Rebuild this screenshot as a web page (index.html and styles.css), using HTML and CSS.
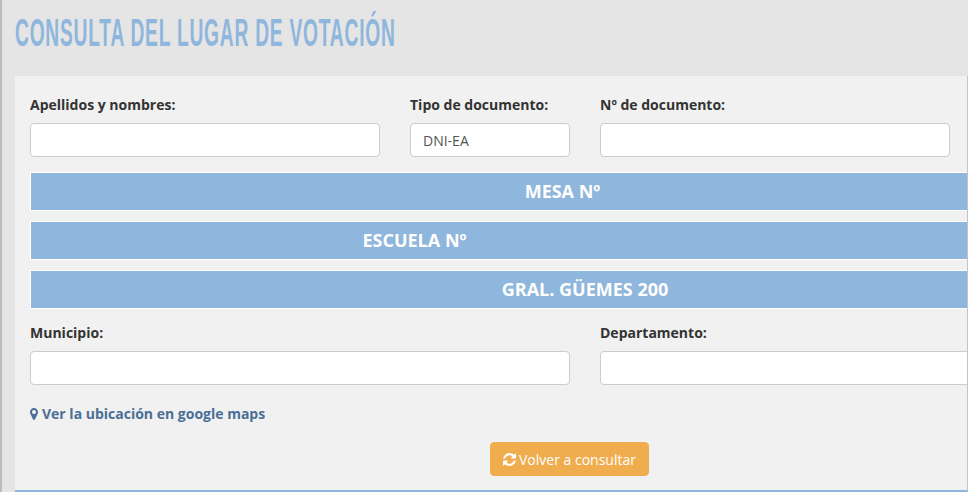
FILE: index.html
```html
<!DOCTYPE html>
<html lang="es">
<head>
<meta charset="utf-8">
<title>Consulta del lugar de votación</title>
<link rel="stylesheet" href="styles.css">
</head>
<body>
<div class="page">
  <h1 class="title">CONSULTA DEL LUGAR DE VOTACIÓN</h1>
  <main class="panel">
    <div class="row row-top">
      <div class="field"><label class="label">Apellidos y nombres:</label><input class="input" type="text" readonly></div>
      <div class="field"><label class="label">Tipo de documento:</label><input class="input" type="text" value="DNI-EA" readonly></div>
      <div class="field"><label class="label">Nº de documento:</label><input class="input" type="text" readonly></div>
    </div>
    <div class="bars">
      <div class="bar">MESA Nº<span class="gap gap-mesa"></span></div>
      <div class="bar">ESCUELA Nº<span class="gap gap-escuela"></span></div>
      <div class="bar">GRAL. GÜEMES 200</div>
    </div>
    <div class="row row-bottom">
      <div class="field"><label class="label">Municipio:</label><input class="input" type="text" readonly></div>
      <div class="field"><label class="label">Departamento:</label><input class="input" type="text" readonly></div>
    </div>
    <a class="map-link" href="#">
      <svg class="pin" viewBox="384 128 1024 1536" aria-hidden="true"><path d="M1152 640q0-106-75-181t-181-75-181 75-75 181 75 181 181 75 181-75 75-181zm256 0q0 109-33 179l-364 774q-16 33-47.5 52t-67.5 19-67.5-19-46.5-52l-365-774q-33-70-33-179 0-212 150-362t362-150 362 150 150 362z"/></svg>Ver la ubicación en google maps
    </a>
    <div class="actions">
      <button class="btn" type="button">
        <svg class="refresh" viewBox="128 128 1536 1536" aria-hidden="true"><path d="M1639 1056q0 5-1 7-64 268-268 434.5t-478 166.5q-146 0-282.5-55t-243.5-157l-129 129q-19 19-45 19t-45-19-19-45v-448q0-26 19-45t45-19h448q26 0 45 19t19 45-19 45l-137 137q71 66 161 102t187 36q134 0 250-65t186-179q11-17 53-117 8-23 30-23h192q13 0 22.5 9.5t9.5 22.5zm25-800v448q0 26-19 45t-45 19h-448q-26 0-45-19t-19-45 19-45l138-138q-148-137-349-137-134 0-250 65t-186 179q-11 17-53 117-8 23-30 23h-199q-13 0-22.5-9.5t-9.5-22.5v-7q65-268 270-434.5t480-166.5q146 0 284 55.5t245 156.5l130-129q19-19 45-19t45 19 19 45z"/></svg>Volver a consultar
      </button>
    </div>
  </main>
</div>
</body>
</html>
```
FILE: styles.css
```css
* { box-sizing: border-box; }
html, body { margin: 0; height: 100%; overflow: hidden; }
body {
  background: #e5e5e5;
  font-family: "Open Sans", sans-serif;
  font-size: 14px;
  color: #333;
}
.page {
  height: 492px;
  border-left: 2px solid #bcbcbc;
  padding-left: 13px;
  display: flex;
  flex-direction: column;
}
.title {
  margin: 0;
  flex: 0 0 76px;
  padding-top: 12px;
  font-family: "Liberation Sans", sans-serif;
  font-size: 38px;
  line-height: 42px;
  font-weight: 700;
  letter-spacing: 1.5px;
  color: #8fb6dc;
  white-space: nowrap;
  transform: scaleX(0.506);
  transform-origin: left top;
}
.panel {
  flex: 1;
  min-width: 0;
  padding: 19px 0 0 15px;
  background: #f1f1f1;
  border-bottom: 2px solid #8fb6dc;
  border-right: 1px solid #c4c4c4;
  overflow: hidden;
}
.row { display: flex; gap: 30px; }
.row-top .field:nth-child(1), .row-top .field:nth-child(3) { flex: 0 0 350px; }
.row-top .field:nth-child(2) { flex: 0 0 160px; }
.row-bottom .field:nth-child(1) { flex: 0 0 540px; }
.row-bottom .field:nth-child(2) { flex: 0 0 540px; }
.label {
  display: block;
  height: 19px;
  margin-bottom: 9px;
  font-weight: 700;
  line-height: 19px;
  color: #333;
}
.input {
  display: block;
  width: 100%;
  height: 34px;
  padding: 6px 12px;
  background: #fff;
  border: 1px solid #ccc;
  border-radius: 4px;
  font-family: "Open Sans", sans-serif;
  font-size: 14px;
  color: #555;
  outline: none;
}
.bars {
  width: 1109px;
  margin-top: 15px;
  display: flex;
  flex-direction: column;
  gap: 10px;
}
.bar {
  height: 39px;
  background: #8fb6dc;
  border: 1px solid #fff;
  border-right: 0;
  text-align: center;
  font-size: 18px;
  font-weight: 700;
  line-height: 36px;
  color: #fff;
  white-space: nowrap;
}
.gap { display: inline-block; }
.gap-mesa { width: 45px; }
.gap-escuela { width: 341px; }
.row-bottom { margin-top: 14px; }
.map-link {
  display: flex;
  align-items: center;
  margin-top: 19px;
  height: 19px;
  font-weight: 700;
  color: #4a6f96;
  text-decoration: none;
}
.pin { width: 8px; height: 12px; margin-right: 4px; fill: currentColor; }
.actions { padding-left: 460px; margin-top: 19px; }
.btn {
  display: flex;
  align-items: center;
  width: 159px;
  height: 34px;
  padding: 0 12px;
  background: #f0ad4e;
  border: 1px solid #f0ad4e;
  border-radius: 4px;
  font-family: "Open Sans", sans-serif;
  font-size: 14px;
  color: #fff;
  white-space: nowrap;
}
.refresh { flex: none; width: 13px; height: 13px; margin-right: 3px; fill: currentColor; }
```
